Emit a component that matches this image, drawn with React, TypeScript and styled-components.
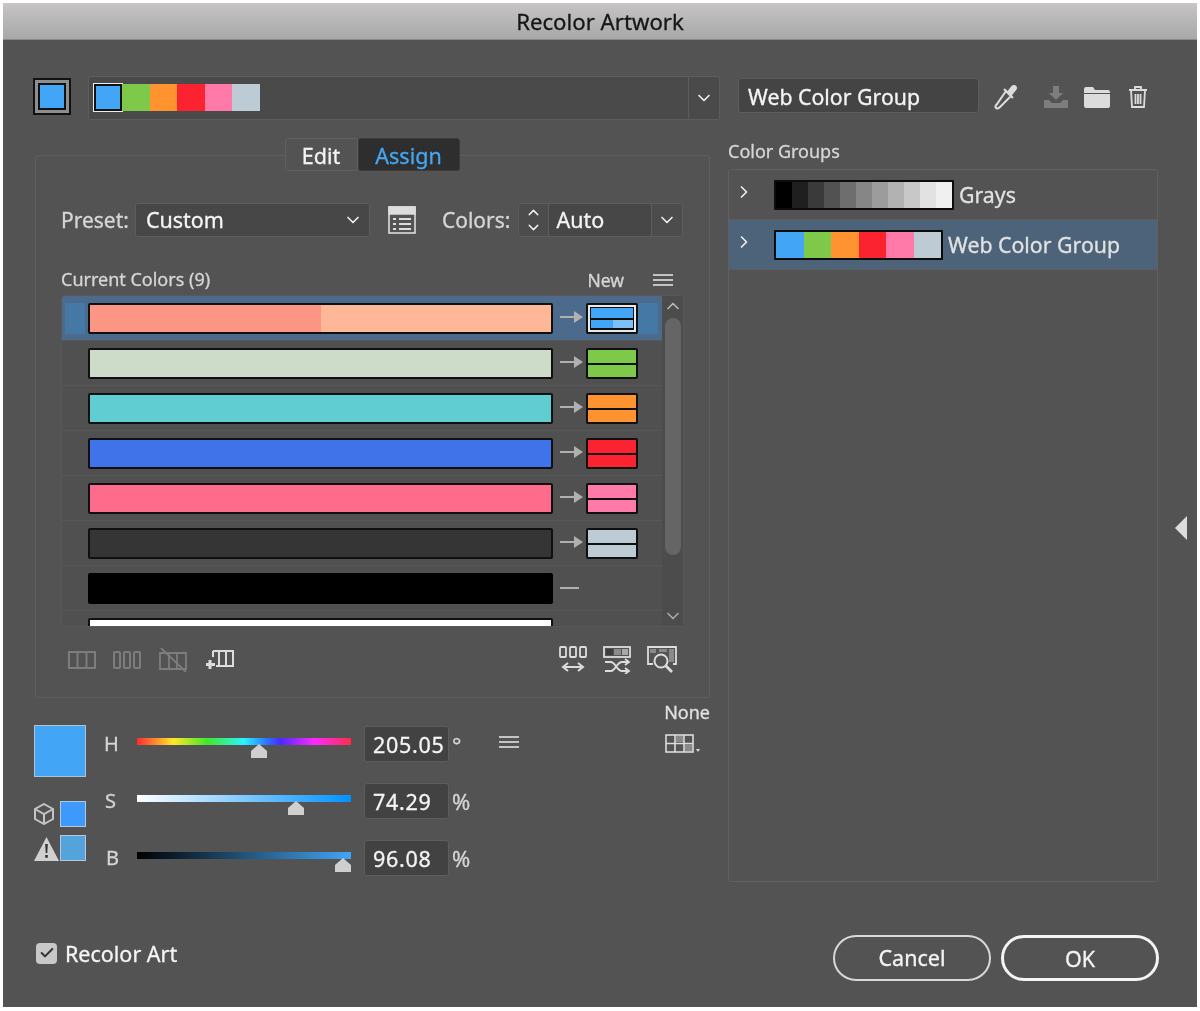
import React from 'react'
import styled, { createGlobalStyle } from 'styled-components'
import { Check, ChevronDown, ChevronRight, ChevronUp } from 'lucide-react'

const Global = createGlobalStyle`
  html, body { margin: 0; background: #fff; }
  * { box-sizing: border-box; }
  body {
    font-family: "Noto Sans", "Open Sans", sans-serif;
    color: #f4f4f4;
    -webkit-text-stroke: 0.3px currentColor;
  }
`

const WEB_COLORS = ['#42a5f5', '#7ec84a', '#ff9330', '#fb2330', '#ff7aa8', '#bdccd4']
const GRAYS = ['#000', '#1f1f1f', '#3a3a3a', '#525252', '#6e6e6e', '#868686', '#9c9c9c', '#b2b2b2', '#c8c8c8', '#e2e2e2', '#f0f0f0']

const ROWS = [
  { current: ['#fb9584', '#ffb897'], next: '#42a5f5', active: true },
  { current: ['#cddcc8'], next: '#7ec84a' },
  { current: ['#5fcdd2'], next: '#ff9330' },
  { current: ['#4072ea'], next: '#fb2330' },
  { current: ['#fe6b8b'], next: '#ff7aa8' },
  { current: ['#353535'], next: '#bdccd4' },
  { current: ['#000'], dash: true, flat: true },
  { current: ['#fff'] },
]

const Page = styled.div`
  width: 1200px;
  height: 1011px;
  padding: 3px 3px 4px 3px;
  background: #fff;
  filter: blur(0.45px);
`
const Win = styled.div`
  height: 100%;
  background: #535353;
  display: flex;
  flex-direction: column;
`
const TitleBar = styled.div`
  height: 37px;
  flex: none;
  background: linear-gradient(#c6c4c4, #a9a8a8);
  border-bottom: 1px solid #8a8a8a;
  color: #161616;
  font-size: 22.2px;
  line-height: 38px;
  text-align: center;
`
const Body = styled.div`
  flex: 1;
  display: grid;
  grid-template-columns: 675px 430px 1fr;
  grid-template-rows: 44px auto;
  align-content: start;
  column-gap: 18px;
  padding: 36px 0 0 32px;
`
const TopBar = styled.div`
  grid-column: 1;
  display: flex;
  align-items: flex-start;
  height: 44px;
  margin-left: -2px;
`
const ActiveSwatch = styled.div`
  width: 38px;
  height: 37px;
  flex: none;
  margin: 2px 17px 0 0;
  border: 2px solid #111;
  background: #8e8e8e;
  padding: 3px;
  div { width: 100%; height: 100%; background: #42a5f5; border: 2px solid #111; }
`
const GroupBar = styled.div`
  width: 632px;
  height: 44px;
  flex: none;
  display: flex;
  background: #4a4a4a;
  border: 1px solid #5d5d5d;
  border-radius: 2px;
`
const GroupStrip = styled.div`
  flex: 1;
  display: flex;
  padding: 7px 0 0 5px;
`
const Cell = styled.div<{ $c: string; $w: number }>`
  width: ${p => p.$w}px;
  height: 27px;
  background: ${p => p.$c};
`
const FirstCell = styled.div`
  width: 28px;
  height: 27px;
  background: #42a5f5;
  border: 2px solid #111;
  box-shadow: 0 0 0 1px #eee;
`
const DropZone = styled.div`
  width: 31px;
  flex: none;
  border-left: 1px solid #5d5d5d;
  display: flex;
  align-items: center;
  justify-content: center;
`
const NameRow = styled.div`
  grid-column: 2 / 4;
  display: flex;
  align-items: center;
  height: 42px;
  margin-left: 10px;
`
const NameInput = styled.div`
  width: 241px;
  height: 35px;
  margin-top: -3px;
  background: #444;
  border: 1px solid #5d5d5d;
  border-radius: 3px;
  padding-left: 9px;
  font-size: 21.3px;
  line-height: 36px;
  white-space: nowrap;
`
const ToolIcons = styled.div`
  display: flex;
  align-items: center;
  margin-left: 12px;
  svg:nth-child(2) { margin-left: 24px; }
  svg:nth-child(3) { margin-left: 15px; }
  svg:nth-child(4) { margin-left: 18px; }
`
const Left = styled.div`
  grid-column: 1;
  margin-top: 18px;
  display: flex;
  flex-direction: column;
`
const Tabs = styled.div`
  align-self: center;
  display: flex;
  height: 33px;
  margin-bottom: -16px;
  margin-left: -1px;
  background: #535353;
  position: relative;
`
const Tab = styled.div<{ $on?: boolean }>`
  width: ${p => (p.$on ? 102 : 73)}px;
  border: 1px solid ${p => (p.$on ? '#3b3b3b' : '#606060')};
  border-radius: 3px;
  background: ${p => (p.$on ? '#2e2e2e' : '#535353')};
  color: ${p => (p.$on ? '#45a6f2' : '#f4f4f4')};
  font-size: 21.5px;
  line-height: 33px;
  text-align: center;
`
const Frame = styled.div`
  height: 543px;
  border: 1px solid #5f5f5f;
  border-radius: 3px;
  padding: 47px 24px 0 25px;
`
const PresetRow = styled.div`
  display: flex;
  align-items: center;
  height: 34px;
`
const Label = styled.span`
  color: #d6d6d6;
  font-size: 21px;
`
const Select = styled.div<{ $w: number }>`
  width: ${p => p.$w}px;
  height: 34px;
  background: #474747;
  border: 1px solid #5d5d5d;
  border-radius: 3px;
  display: flex;
  align-items: center;
  justify-content: space-between;
  padding: 0 6px 0 10px;
  font-size: 21.5px;
  line-height: 30px;
  margin-left: 6px;
`
const MenuIconSlot = styled.div`
  margin: 0 26px 0 18px;
  height: 28px;
`
const Stepper = styled.div`
  display: flex;
  flex: none;
  margin-left: 8px;
  height: 34px;
  width: 165px;
  background: #4c4c4c;
  border: 1px solid #5d5d5d;
  border-radius: 3px;
`
const StepBtn = styled.div`
  width: 30px;
  flex: none;
  display: flex;
  flex-direction: column;
  align-items: center;
  justify-content: center;
  border-right: 1px solid #5d5d5d;
  svg { margin: -1px 0; }
`
const AutoField = styled.div`
  flex: 1;
  background: #474747;
  font-size: 21.5px;
  line-height: 32px;
  padding-left: 7px;
`
const AutoDrop = styled.div`
  width: 31px;
  flex: none;
  border-left: 1px solid #5d5d5d;
  display: flex;
  align-items: center;
  justify-content: center;
`
const ListHead = styled.div`
  display: flex;
  align-items: center;
  height: 28px;
  margin-top: 28px;
  color: #d6d6d6;
  font-size: 18px;
`
const HeadNew = styled.span`
  margin-left: auto;
  margin-right: 29px;
  margin-top: 2px;
  font-size: 17.5px;
`
const HeadMenu = styled.div`
  display: flex;
  margin: 2px 12px 0 0;
`
const List = styled.div`
  margin-top: 2px;
  width: 623px;
  height: 332px;
  overflow: hidden;
  display: flex;
  background: #505050;
  border: 1px solid #585858;
  border-radius: 3px;
`
const RowsCol = styled.div`
  width: 600px;
  flex: none;
  overflow: hidden;
`
const Row = styled.div<{ $on?: boolean }>`
  height: 45px;
  display: flex;
  align-items: center;
  background: ${p => (p.$on ? '#4b6a8c' : 'transparent')};
  border-bottom: 1px solid #575757;
`
const Grip = styled.div<{ $on?: boolean }>`
  width: 20px;
  height: 31px;
  margin: 0 3px;
  background: ${p => (p.$on ? '#4678a6' : 'transparent')};
`
const CurrentBar = styled.div<{ $flat?: boolean }>`
  width: 465px;
  height: 31px;
  flex: none;
  display: flex;
  border: ${p => (p.$flat ? 'none' : '2px solid #101010')};
  border-radius: 2px;
  overflow: hidden;
  div { flex: 1; }
`
const ArrowSlot = styled.div`
  width: 33px;
  flex: none;
  display: flex;
  align-items: center;
  justify-content: center;
  padding-left: 4px;
  svg { margin-top: -3px; }
`
const Dash = styled.div`
  width: 19px;
  height: 2px;
  margin-left: -4px;
  background: #b0b0b0;
`
const NewSwatch = styled.div<{ $c: string; $on?: boolean }>`
  width: 52px;
  height: 31px;
  flex: none;
  background: #101010;
  border: 2px solid #101010;
  border-radius: 2px;
  padding: ${p => (p.$on ? '3px' : '0')};
  box-shadow: ${p => (p.$on ? 'inset 0 0 0 2px #e8e8e8' : 'none')};
  display: grid;
  grid-template-rows: 1.2fr 1fr;
  row-gap: 2px;
  div { background: ${p => p.$c}; position: relative; }
`
const Tint = styled.span`
  position: absolute;
  right: 0;
  top: 0;
  bottom: 0;
  width: 20px;
  background: #7cc0f6;
`
const RightGrip = styled.div`
  width: 20px;
  height: 31px;
  background: #4678a6;
`
const Scroll = styled.div`
  flex: 1;
  background: #4c4c4c;
  display: flex;
  flex-direction: column;
  align-items: center;
`
const Thumb = styled.div`
  width: 16px;
  height: 237px;
  margin-top: 2px;
  background: #656565;
  border-radius: 8px;
  margin-bottom: auto;
`
const UtilRow = styled.div`
  display: flex;
  align-items: center;
  height: 36px;
  margin-top: 15px;
  padding-left: 7px;
`
const UtilGap = styled.div`
  margin-left: auto;
  display: flex;
  align-items: center;
  gap: 16px;
  margin-right: 8px;
`
const UtilLeft = styled.div`
  display: flex;
  align-items: center;
  gap: 17px;
`
const Hsb = styled.div`
  display: grid;
  grid-template-columns: 69px 1fr;
  margin-top: 10px;
  position: relative;
`
const SwatchCol = styled.div`
  padding-top: 17px;
  display: flex;
  flex-direction: column;
`
const BigSwatch = styled.div`
  width: 52px;
  height: 52px;
  margin-left: -1px;
  background: #42a5f5;
  border: 1px solid #b0c4d4;
`
const SmallRow = styled.div<{ $top: number; $c: string }>`
  margin-top: ${p => p.$top}px;
  display: flex;
  width: 52px;
  margin-left: -1px;
  height: 26px;
  align-items: center;
  justify-content: space-between;
  i { display: block; width: 26px; height: 26px; background: ${p => p.$c}; border: 1px solid #b5c8d8; }
`
const Sliders = styled.div`
  padding-top: 18px;
`
const SliderRow = styled.div<{ $mb: number }>`
  display: flex;
  align-items: center;
  height: 36px;
  margin-bottom: ${p => p.$mb}px;
`
const Letter = styled.div<{ $indent?: number }>`
  width: 33px;
  padding-left: ${p => p.$indent || 0}px;
  color: #d6d6d6;
  font-size: 20px;
  line-height: 36px;
`
const Track = styled.div<{ $bg: string }>`
  width: 214px;
  height: 7px;
  margin-top: -5px;
  background: ${p => p.$bg};
  position: relative;
`
const SliderKnob = styled.div<{ $x: number }>`
  position: absolute;
  left: ${p => p.$x}px;
  top: 6px;
  width: 16px;
  height: 14px;
  background: #cfcfcf;
  clip-path: polygon(50% 0, 100% 50%, 100% 100%, 0 100%, 0 50%);
`
const Field = styled.div`
  width: 85px;
  height: 36px;
  margin-left: 13px;
  background: #424242;
  border: 1px solid #5d5d5d;
  border-radius: 3px;
  font-size: 21.5px;
  letter-spacing: 0.7px;
  line-height: 36px;
  padding-left: 8px;
`
const Unit = styled.span`
  color: #d6d6d6;
  font-size: 22px;
  margin-left: 3px;
  line-height: 36px;
`
const MenuSlot = styled.div`
  display: flex;
  margin: -4px 0 0 38px;
`
const NoneBox = styled.div`
  position: absolute;
  right: 0;
  top: -11px;
  display: flex;
  flex-direction: column;
  align-items: flex-end;
  svg { margin: 7px 9px 0 0; }
`
const NoneText = styled.span`
  font-size: 18px;
  color: #e0e0e0;
  line-height: 30px;
`
const GroupCol = styled.div`
  grid-column: 2;
  margin-top: 18px;
`
const GroupTitle = styled.div`
  color: #d6d6d6;
  font-size: 18px;
  height: 31px;
  line-height: 27px;
`
const GroupList = styled.div`
  height: 713px;
  border: 1px solid #606060;
  border-radius: 3px;
`
const GroupItem = styled.div<{ $on?: boolean }>`
  height: 50px;
  display: flex;
  align-items: center;
  padding-left: 5px;
  background: ${p => (p.$on ? '#4d6379' : 'transparent')};
  border-bottom: 1px solid #5d5d5d;
  font-size: 21.3px;
  color: #e2e2e2;
  svg { margin-top: -5px; }
`
const Strip = styled.div`
  display: flex;
  height: 30px;
  margin: 0 5px 0 20px;
  border: 2px solid #0c0c0c;
  border-radius: 1px;
  div { height: 26px; }
`
const Collapse = styled.div`
  grid-column: 3;
  align-self: start;
  margin: 396px 0 0 -1px;
  width: 0;
  height: 0;
  border-style: solid;
  border-width: 12px 12px 12px 0;
  border-color: transparent #dcdcdc transparent transparent;
`
const Footer = styled.div`
  flex: none;
  display: flex;
  align-items: center;
  padding: 0 38px 0 33px;
  height: 98px;
`
const CheckBox = styled.div`
  width: 21px;
  height: 21px;
  background: #c8c8c8;
  border-radius: 4px;
  display: flex;
  align-items: center;
  justify-content: center;
  margin-top: -10px;
`
const CheckLabel = styled.span`
  margin-left: 8px;
  margin-top: -10px;
  font-size: 21.5px;
`
const Buttons = styled.div`
  margin-left: auto;
  display: flex;
  gap: 10px;
`
const Btn = styled.div<{ $primary?: boolean }>`
  width: 158px;
  height: 46px;
  border: ${p => (p.$primary ? 3 : 2)}px solid ${p => (p.$primary ? '#f4f4f4' : '#d8d8d8')};
  border-radius: 23px;
  font-size: 21.5px;
  line-height: 42px;
  text-align: center;
`

const W = '#dcdcdc'
const D = '#7d7d7d'

const Menu = () => (
  <svg width="20" height="14" viewBox="0 0 20 14" fill="none" stroke="#c4c4c4" strokeWidth="2">
    <path d="M0 2h20M0 7h20M0 12h20" />
  </svg>
)
const Arrow = () => (
  <svg width="23" height="14" viewBox="0 0 23 14" fill="#b0b0b0">
    <path d="M0 6h14V1l9 6-9 6V8H0z" />
  </svg>
)
const Eyedropper = () => (
  <svg width="28" height="28" viewBox="0 0 28 28" fill="none" stroke={W} strokeWidth="2">
    <path d="M15 8l5 5L9 24c-1 1-3 2-4 1s0-3 1-4z" />
    <path d="M13 6l9 9M17 9l4-5c1.5-1.5 3-1 3.5-.3s.8 2-.5 3.300l-4 5" fill={W} />
  </svg>
)
const Save = () => (
  <svg width="26" height="24" viewBox="0 0 26 24" fill={D}>
    <path d="M10 1h6v7h4l-7 7-7-7h4z" />
    <path d="M1 15h5l3 3h8l3-3h5v8H1z" />
  </svg>
)
const Folder = () => (
  <svg width="26" height="22" viewBox="0 0 26 22" fill={W}>
    <path d="M0 3q0-2 2-2h7l2 3h13q2 0 2 2v1H0z" />
    <path d="M0 8h26v12q0 2-2 2H2q-2 0-2-2z" />
  </svg>
)
const Trash = () => (
  <svg width="20" height="24" viewBox="0 0 20 24" fill="none" stroke={W} strokeWidth="1.8">
    <path d="M1 5h18M7 5V2h6v3M3 5l1 17h12l1-17M7.500 9v10M10 9v10M12.500 9v10" />
  </svg>
)
const ListIcon = () => (
  <svg width="28" height="28" viewBox="0 0 28 28" fill="none" stroke={W} strokeWidth="1.6">
    <rect x="1" y="1" width="26" height="26" />
    <path d="M1 1h26v7H1z" fill={W} />
    <path d="M5 13h3M11 13h12M5 18h3M11 18h12M5 23h3M11 23h12" strokeWidth="2" />
  </svg>
)
const Cols = () => (
  <svg width="28" height="18" viewBox="0 0 28 18" fill="none" stroke={D} strokeWidth="2">
    <rect x="1" y="1" width="26" height="16" />
    <path d="M9.500 1v16M18.500 1v16" />
  </svg>
)
const Pills = () => (
  <svg width="28" height="18" viewBox="0 0 28 18" fill="none" stroke={D} strokeWidth="2">
    <rect x="1" y="1" width="6" height="16" rx="1" />
    <rect x="11" y="1" width="6" height="16" rx="1" />
    <rect x="21" y="1" width="6" height="16" rx="1" />
  </svg>
)
const NoCols = () => (
  <svg width="30" height="24" viewBox="0 0 30 24" fill="none" stroke={D} strokeWidth="1.8">
    <path d="M2 5h26v16H2zM11 5v16M19 5v16" />
    <path d="M3 0l25 24" />
  </svg>
)
const AddCols = () => (
  <svg width="30" height="22" viewBox="0 0 30 22" fill="none" stroke={W} strokeWidth="2">
    <path d="M8 2h20v15H11" />
    <path d="M14 2v15M21 2v15" />
    <path d="M8 2v6" />
    <path d="M5 11v9M1 15.500h9" strokeWidth="3" />
  </svg>
)
const Distribute = () => (
  <svg width="28" height="28" viewBox="0 0 28 28" fill="none" stroke={W} strokeWidth="1.8">
    <rect x="1" y="1" width="6" height="10" rx="1" />
    <rect x="11" y="1" width="6" height="10" rx="1" />
    <rect x="21" y="1" width="6" height="10" rx="1" />
    <path d="M6 21h16M9 17l-5 4 5 4M19 17l5 4-5 4" strokeWidth="2" />
  </svg>
)
const Shuffle = () => (
  <svg width="28" height="28" viewBox="0 0 28 28" fill="none" stroke={W} strokeWidth="1.8">
    <rect x="1" y="1" width="26" height="10" />
    <rect x="3" y="3" width="7" height="6" fill="#3d3d3d" stroke="none" />
    <rect x="11" y="3" width="7" height="6" fill="#8a8a8a" stroke="none" />
    <rect x="19" y="3" width="6" height="6" fill="#a8a8a8" stroke="none" />
    <path d="M2 16h6c4 0 6 9 11 9h6M2 25h6c4 0 6-9 11-9h6M22 13l4 3-4 3M22 22l4 3-4 3" />
  </svg>
)
const Inspect = () => (
  <svg width="30" height="28" viewBox="0 0 30 28" fill="none" stroke={W} strokeWidth="1.8">
    <path d="M6 18H1V1h28v17h-3" />
    <path d="M3 3h6v4H3z" fill="#8a8a8a" stroke="none" />
    <path d="M12 3h8v3h-8zM22 3h5v13h-5z" fill="#8a8a8a" stroke="none" />
    <circle cx="14" cy="15" r="6.500" fill="#535353" strokeWidth="2" />
    <path d="M19 20l6 6" strokeWidth="2.800" />
  </svg>
)
const GridIcon = () => (
  <svg width="36" height="20" viewBox="0 0 36 20" fill="none" stroke={W} strokeWidth="1.6">
    <rect x="1" y="1" width="27" height="17" />
    <path d="M1 9.500h27M10 1v17M19 1v17" />
    <rect x="11" y="2" width="7" height="6" fill="#8a8a8a" stroke="none" />
    <rect x="20" y="10" width="7" height="7" fill="#8a8a8a" stroke="none" />
    <path d="M31 15h4l-2 3z" fill={W} stroke="none" />
  </svg>
)
const Cube = () => (
  <svg width="20" height="22" viewBox="0 0 20 22" fill="none" stroke="#c4c4c4" strokeWidth="2">
    <path d="M10 1l9 5v10l-9 5-9-5V6zM1 6l9 5 9-5M10 11v10" />
  </svg>
)
const Warn = () => (
  <svg width="25" height="25" viewBox="0 0 25 25">
    <path d="M12.500 1L25 25H0z" fill="#d0d0d0" />
    <path d="M11.200 8h2.600l-.5 9h-1.600zM11.200 19h2.600v2.800h-2.600z" fill="#333" />
  </svg>
)

const App = () => (
  <Page>
    <Global />
    <Win>
      <TitleBar>Recolor Artwork</TitleBar>
      <Body>
        <TopBar>
          <ActiveSwatch><div /></ActiveSwatch>
          <GroupBar>
            <GroupStrip>
              <FirstCell />
              {WEB_COLORS.slice(1).map(c => <Cell key={c} $c={c} $w={27.5} />)}
            </GroupStrip>
            <DropZone><ChevronDown size={20} color="#eee" strokeWidth={2} /></DropZone>
          </GroupBar>
        </TopBar>
        <NameRow>
          <NameInput>Web Color Group</NameInput>
          <ToolIcons>
            <Eyedropper />
            <Save />
            <Folder />
            <Trash />
          </ToolIcons>
        </NameRow>

        <Left>
          <Tabs>
            <Tab>Edit</Tab>
            <Tab $on>Assign</Tab>
          </Tabs>
          <Frame>
            <PresetRow>
              <Label>Preset:</Label>
              <Select $w={235}>Custom<ChevronDown size={20} color="#eee" /></Select>
              <MenuIconSlot><ListIcon /></MenuIconSlot>
              <Label>Colors:</Label>
              <Stepper>
                <StepBtn><ChevronUp size={17} color="#eee" /><ChevronDown size={17} color="#eee" /></StepBtn>
                <AutoField>Auto</AutoField>
                <AutoDrop><ChevronDown size={20} color="#eee" /></AutoDrop>
              </Stepper>
            </PresetRow>
            <ListHead>
              Current Colors (9)
              <HeadNew>New</HeadNew>
              <HeadMenu><Menu /></HeadMenu>
            </ListHead>
            <List>
              <RowsCol>
                {ROWS.map((r, i) => (
                  <Row key={i} $on={r.active}>
                    <Grip $on={r.active} />
                    <CurrentBar $flat={r.flat}>
                      {r.current.map(c => <div key={c} style={{ background: c }} />)}
                    </CurrentBar>
                    <ArrowSlot>
                      {r.next && <Arrow />}
                      {r.dash && <Dash />}
                    </ArrowSlot>
                    {r.next && (
                      <NewSwatch $c={r.next} $on={r.active}>
                        <div />
                        <div>{r.active && <Tint />}</div>
                      </NewSwatch>
                    )}
                    {r.active && <RightGrip />}
                  </Row>
                ))}
              </RowsCol>
              <Scroll>
                <ChevronUp size={20} color="#bbb" />
                <Thumb />
                <ChevronDown size={20} color="#aaa" />
              </Scroll>
            </List>
            <UtilRow>
              <UtilLeft>
                <Cols />
                <Pills />
                <NoCols />
                <AddCols />
              </UtilLeft>
              <UtilGap>
                <Distribute />
                <Shuffle />
                <Inspect />
              </UtilGap>
            </UtilRow>
          </Frame>
          <Hsb>
            <SwatchCol>
              <BigSwatch />
              <SmallRow $top={24} $c="#3d99fb"><Cube /><i /></SmallRow>
              <SmallRow $top={8} $c="#55a3dc"><Warn /><i /></SmallRow>
            </SwatchCol>
            <Sliders>
              <SliderRow $mb={21}>
                <Letter>H</Letter>
                <Track $bg="linear-gradient(90deg,#ff2a30,#ffe82a 17%,#3fe82a 33%,#2af2ff 50%,#2a7cff 60%,#4a2aff 67%,#ff2aff 83%,#ff2a4a)">
                  <SliderKnob $x={114} />
                </Track>
                <Field>205.05</Field>
                <Unit>°</Unit>
                <MenuSlot><Menu /></MenuSlot>
              </SliderRow>
              <SliderRow $mb={21}>
                <Letter $indent={1}>S</Letter>
                <Track $bg="linear-gradient(90deg,#fff,#0092ff)">
                  <SliderKnob $x={151} />
                </Track>
                <Field>74.29</Field>
                <Unit>%</Unit>
              </SliderRow>
              <SliderRow $mb={0}>
                <Letter $indent={2}>B</Letter>
                <Track $bg="linear-gradient(90deg,#000,#42a5f5)">
                  <SliderKnob $x={198} />
                </Track>
                <Field>96.08</Field>
                <Unit>%</Unit>
              </SliderRow>
            </Sliders>
            <NoneBox>
              <NoneText>None</NoneText>
              <GridIcon />
            </NoneBox>
          </Hsb>
        </Left>

        <GroupCol>
          <GroupTitle>Color Groups</GroupTitle>
          <GroupList>
            <GroupItem>
              <ChevronRight size={20} color="#eee" />
              <Strip>
                {GRAYS.map(c => <Cell key={c} $c={c} $w={16} />)}
              </Strip>
              Grays
            </GroupItem>
            <GroupItem $on>
              <ChevronRight size={20} color="#eee" />
              <Strip>
                {WEB_COLORS.map(c => <Cell key={c} $c={c} $w={27.5} />)}
              </Strip>
              Web Color Group
            </GroupItem>
          </GroupList>
        </GroupCol>
        <Collapse />
      </Body>
      <Footer>
        <CheckBox><Check size={16} color="#333" strokeWidth={3} /></CheckBox>
        <CheckLabel>Recolor Art</CheckLabel>
        <Buttons>
          <Btn>Cancel</Btn>
          <Btn $primary>OK</Btn>
        </Buttons>
      </Footer>
    </Win>
  </Page>
)

export default App
